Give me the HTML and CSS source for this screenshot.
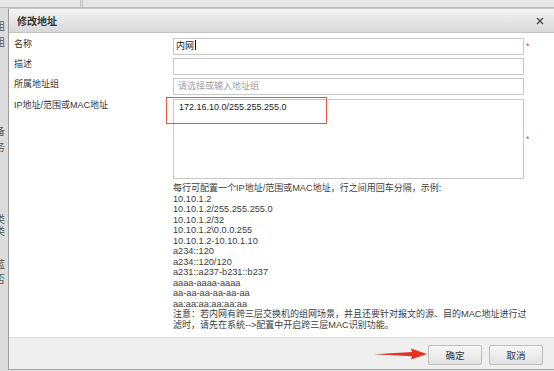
FILE: index.html
```html
<!DOCTYPE html>
<html lang="zh-CN">
<head>
    <meta charset="UTF-8">
    <title>修改地址</title>
    <link rel="stylesheet" href="styles.css">
</head>
<body>
    <div class="page">
        <div class="topbar"><span class="topbar-split"></span></div>
        <div class="side">
            <span class="side-ch c1">组</span>
            <span class="side-ch c2">组</span>
            <span class="side-ch c3">备</span>
            <span class="side-ch c4">务</span>
            <span class="side-ch c5">类</span>
            <span class="side-ch c6">类</span>
            <span class="side-ch c7">蓝</span>
            <span class="side-ch c8">否</span>
        </div>
    </div>

    <div class="dialog">
        <div class="dialog-head">
            <span class="dialog-title">修改地址</span>
            <svg class="close" width="8" height="8" viewBox="0 0 8 8">
                <path d="M1 1 L7 7 M7 1 L1 7" stroke="#4a4a4a" stroke-width="1.4"/>
            </svg>
        </div>

        <div class="dialog-body">
            <div class="row">
                <label class="row-label">名称</label>
                <div class="field">内网<span class="caret"></span></div>
                <span class="req">*</span>
            </div>
            <div class="row">
                <label class="row-label">描述</label>
                <div class="field"></div>
            </div>
            <div class="row">
                <label class="row-label">所属地址组</label>
                <div class="field placeholder">请选择或输入地址组</div>
            </div>
            <div class="row row-ip">
                <label class="row-label">IP地址/范围或MAC地址</label>
                <div class="field area">
                    172.16.10.0/255.255.255.0
                    <span class="mark"></span>
                </div>
                <span class="req">*</span>
            </div>

            <div class="help">
                <div>每行可配置一个<span class="lat">IP</span>地址/范围或<span class="lat">MAC</span>地址，行之间用回车分隔，示例:</div>
                <div class="ex">10.10.1.2</div>
                <div class="ex">10.10.1.2/255.255.255.0</div>
                <div class="ex">10.10.1.2/32</div>
                <div class="ex">10.10.1.2\0.0.0.255</div>
                <div class="ex">10.10.1.2-10.10.1.10</div>
                <div class="ex">a234::120</div>
                <div class="ex">a234::120/120</div>
                <div class="ex">a231::a237-b231::b237</div>
                <div class="ex">aaaa-aaaa-aaaa</div>
                <div class="ex">aa-aa-aa-aa-aa-aa</div>
                <div class="ex">aa:aa:aa:aa:aa:aa</div>
                <div>注意：若内网有跨三层交换机的组网场景，并且还要针对报文的源、目的<span class="lat">MAC</span>地址进行过</div>
                <div>滤时，请先在系统--&gt;配置中开启跨三层<span class="lat">MAC</span>识别功能。</div>
            </div>
        </div>

        <div class="dialog-foot">
            <svg class="arrow" width="56" height="12" viewBox="0 0 56 12">
                <polygon points="0,6.2 38,4 37,0.5 53,6 37,11.5 38,8.2" fill="#e6321e"/>
            </svg>
            <button class="btn">确定</button>
            <button class="btn">取消</button>
        </div>
    </div>
</body>
</html>
```

FILE: styles.css
```css
* {
    box-sizing: border-box;
}

body {
    margin: 0;
    width: 554px;
    height: 371px;
    overflow: hidden;
    position: relative;
    background-color: #dcdcdc;
    font-family: "Liberation Sans", "Noto Sans CJK SC", sans-serif;
    color: #333;
}

/* page behind the dialog */
.page {
    display: flex;
    flex-direction: column;
    height: 371px;
}

.topbar {
    height: 8px;
    background-color: #e6e6e6;
    border-bottom: 1px solid #bcbcbc;
}

.topbar-split {
    display: block;
    margin-left: 80px;
    width: 3px;
    height: 7px;
    border-left: 1px solid #c4c4c4;
    border-right: 1px solid #c4c4c4;
}

.side {
    width: 7px;
    overflow: hidden;
    display: flex;
    flex-direction: column;
}

.side-ch {
    display: block;
    width: 12px;
    margin-left: -5px;
    font-size: 10px;
    line-height: 12px;
    color: #555;
}

.c1 { margin-top: 13px; }
.c2 { margin-top: 4px; }
.c3 { margin-top: 77px; }
.c4 { margin-top: 4px; }
.c5 { margin-top: 60px; }
.c6 { margin-top: 0; }
.c7 { margin-top: 21px; }
.c8 { margin-top: 3px; }

/* dialog */
.dialog {
    position: absolute;
    left: 8px;
    top: 8px;
    right: 0;
    height: 362px;
    background-color: #fff;
    border-left: 1px solid #9c9c9c;
    border-top: 1px solid #c8c8c8;
    border-bottom: 1px solid #a8a8a8;
    display: flex;
    flex-direction: column;
}

.dialog-head {
    height: 24px;
    flex: none;
    display: flex;
    align-items: center;
    justify-content: space-between;
    padding: 0 10px 0 8px;
    background: linear-gradient(#f4f4f4, #d8d8d8);
    border-bottom: 1px solid #c2c2c2;
}

.dialog-title {
    font-size: 10px;
    font-weight: bold;
    color: #333;
}

.close {
    display: block;
}

.dialog-body {
    flex: 1;
    padding-top: 5px;
}

.row {
    display: flex;
    align-items: flex-start;
    margin-bottom: 3px;
}

.row-ip {
    margin-top: 4px;
}

.row-label {
    width: 164px;
    flex: none;
    padding-left: 5px;
    font-size: 9px;
    line-height: 13px;
    color: #333;
}

.field {
    width: 351px;
    height: 17px;
    border: 1px solid #c9c9c9;
    font-size: 9px;
    line-height: 15px;
    padding-left: 2px;
    color: #222;
    white-space: nowrap;
}

.placeholder {
    color: #a0a0a0;
    padding-left: 4px;
}

.caret {
    display: inline-block;
    width: 1px;
    height: 10px;
    margin-left: 1px;
    vertical-align: -1px;
    background-color: #111;
}

.area {
    height: 80px;
    position: relative;
    padding: 2px 5px;
    line-height: 11px;
}

.mark {
    position: absolute;
    left: -8px;
    top: -3px;
    width: 161px;
    height: 27px;
    border: 1px solid #e8573f;
}

.req {
    align-self: center;
    margin-left: 2px;
    font-size: 9px;
    line-height: 9px;
    color: #f03c3c;
}

.help {
    margin: 4px 0 0 164px;
    font-size: 9px;
    line-height: 10.5px;
    color: #3c3c3c;
    white-space: nowrap;
}

.help div {
    height: 10.5px;
}

.help .ex,
.help .lat {
    font-family: "Liberation Sans Narrow", "Liberation Sans", sans-serif;
    font-size: 9.2px;
}

.help .lat {
    line-height: 1;
}

.dialog-foot {
    height: 32px;
    flex: none;
    position: relative;
    display: flex;
    justify-content: flex-end;
    align-items: flex-start;
    gap: 7px;
    padding: 7px 11px 0 0;
    background-color: #efefef;
    border-top: 1px solid #e2e2e2;
}

.arrow {
    position: absolute;
    left: 365px;
    top: 10px;
}

.btn {
    width: 54px;
    height: 20px;
    padding: 0;
    border: 1px solid #bdbdbd;
    border-radius: 2px;
    background: linear-gradient(#f6f6f6, #e3e3e3);
    font-family: "Liberation Sans", "Noto Sans CJK SC", sans-serif;
    font-size: 9.5px;
    color: #333;
}
```
